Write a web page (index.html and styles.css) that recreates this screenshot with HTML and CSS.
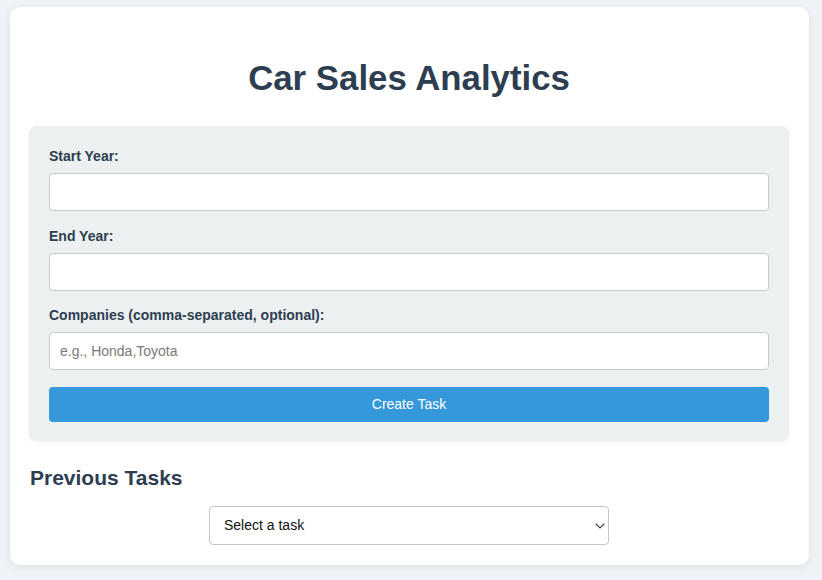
FILE: index.html
```html
<!DOCTYPE html>
<html lang="en">
<head>
<meta charset="utf-8">
<title>Car Sales Analytics</title>
<link rel="stylesheet" href="styles.css">
</head>
<body>
<div class="container">
  <h1 class="title">Car Sales Analytics</h1>
  <form class="form-section" onsubmit="return false;">
    <div class="form-group">
      <label class="label" for="start">Start Year:</label>
      <input class="input" id="start" type="number">
    </div>
    <div class="form-group">
      <label class="label" for="end">End Year:</label>
      <input class="input" id="end" type="number">
    </div>
    <div class="form-group">
      <label class="label" for="companies">Companies (comma-separated, optional):</label>
      <input class="input" id="companies" type="text" placeholder="e.g., Honda,Toyota">
    </div>
    <button class="btn" type="submit">Create Task</button>
  </form>
  <h2 class="subtitle">Previous Tasks</h2>
  <div class="select-row">
    <div class="select-wrap">
      <select class="select">
        <option>Select a task</option>
      </select>
      <svg class="chevron" width="10" height="6" viewBox="0 0 10 6" aria-hidden="true">
        <path d="M1 1 L5 4.8 L9 1" fill="none" stroke="#3a3a3a" stroke-width="1.1" stroke-linecap="round" stroke-linejoin="round"/>
      </svg>
    </div>
  </div>
</div>
</body>
</html>
```

FILE: styles.css
```css
* { box-sizing: border-box; }
html, body {
  margin: 0;
  background: #eff2f6;
}
body {
  padding: 7px 0 15px 10px;
  font-family: "Liberation Sans", Arial, sans-serif;
  font-size: 14px;
  color: #2c3e50;
}
.container {
  width: 799px;
  background: #ffffff;
  border-radius: 10px;
  box-shadow: 0 2px 9px rgba(0, 0, 0, 0.08);
  padding: 20px 20px 20px 19px;
}
.title {
  font-size: 34.8px;
  font-weight: bold;
  text-align: center;
  margin: 31px 0 28px;
  color: #2c3e50;
}
.form-section {
  background: #ecf0f1;
  border-radius: 8px;
  padding: 22px 20px 19.4px;
  box-shadow: 0 1px 4px rgba(0, 0, 0, 0.06);
}
.form-group {
  margin-bottom: 16.5px;
}
.label {
  display: block;
  font-weight: bold;
  font-size: 14px;
  margin-bottom: 9px;
  color: #2c3e50;
}
.input {
  display: block;
  width: 100%;
  height: 38px;
  padding: 0 10px;
  border: 1px solid #c8cbcd;
  border-radius: 4px;
  background: #ffffff;
  font-family: "Liberation Sans", Arial, sans-serif;
  font-size: 14px;
  color: #333;
}
.input::placeholder { color: #7a7a7a; }
.btn {
  display: block;
  width: 100%;
  height: 35px;
  border: none;
  border-radius: 4px;
  background: #3498db;
  color: #ffffff;
  font-family: "Liberation Sans", Arial, sans-serif;
  font-size: 14px;
}
.subtitle {
  font-size: 21px;
  font-weight: bold;
  margin: 25.5px 0 15.4px 1px;
  color: #2c3e50;
}
.select-row {
  display: flex;
  justify-content: center;
}
.select-wrap {
  position: relative;
  width: 400px;
}
.select {
  display: block;
  width: 100%;
  height: 39px;
  padding: 0 14px;
  border: 1px solid #c3c6c8;
  border-radius: 4px;
  background: #ffffff;
  font-family: "Liberation Sans", Arial, sans-serif;
  font-size: 14px;
  color: #111;
  appearance: none;
  -webkit-appearance: none;
}
.chevron {
  position: absolute;
  right: 4px;
  top: 17px;
  pointer-events: none;
}
```
